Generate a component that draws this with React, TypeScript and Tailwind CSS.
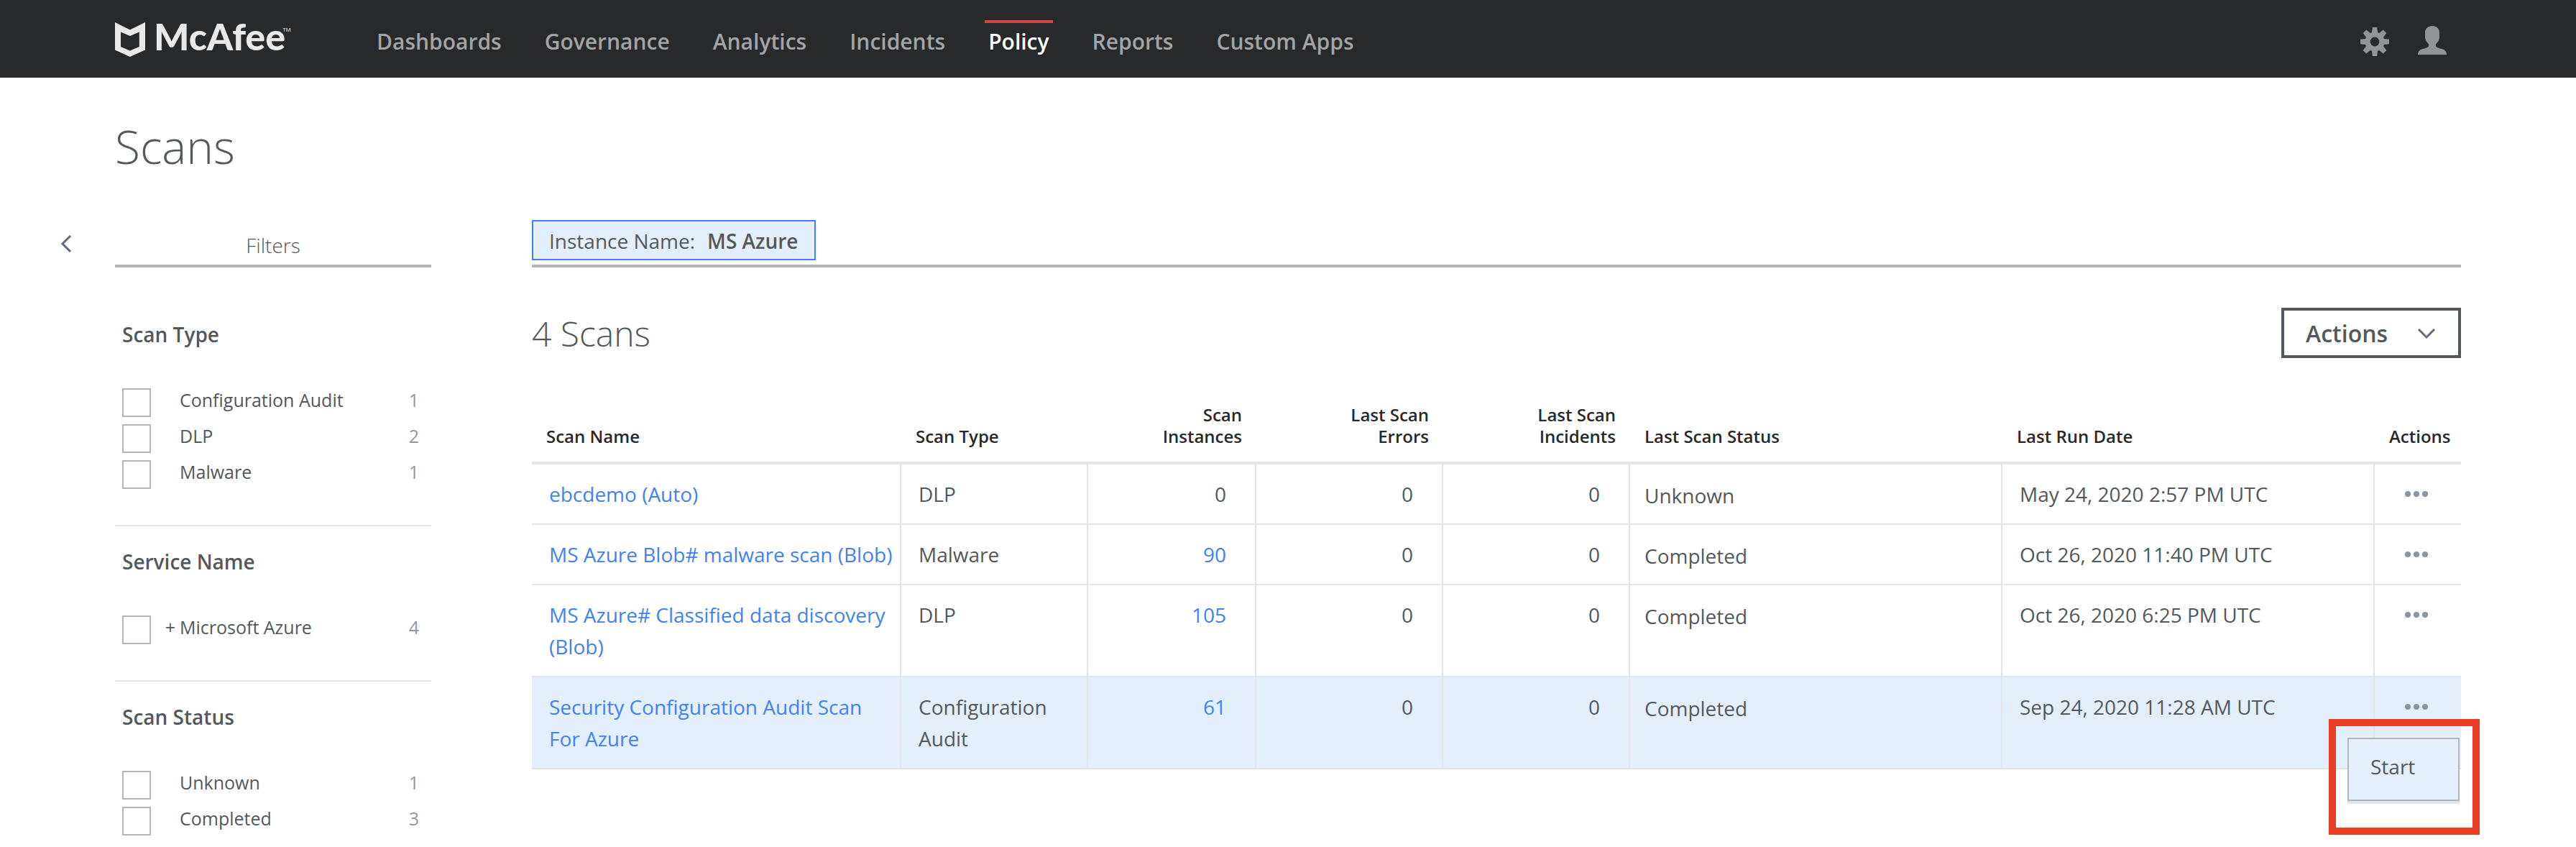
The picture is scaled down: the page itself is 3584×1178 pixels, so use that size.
import React from "react";

const navItems = ["Dashboards", "Governance", "Analytics", "Incidents", "Policy", "Reports", "Custom Apps"];

type FilterOption = { label: string; count: number; expandable?: boolean };

const filterGroups: { title: string; options: FilterOption[] }[] = [
  {
    title: "Scan Type",
    options: [
      { label: "Configuration Audit", count: 1 },
      { label: "DLP", count: 2 },
      { label: "Malware", count: 1 },
    ],
  },
  { title: "Service Name", options: [{ label: "Microsoft Azure", count: 4, expandable: true }] },
  {
    title: "Scan Status",
    options: [
      { label: "Unknown", count: 1 },
      { label: "Completed", count: 3 },
    ],
  },
];

const scans = [
  { name: "ebcdemo (Auto)", type: "DLP", instances: 0, errors: 0, incidents: 0, status: "Unknown", date: "May 24, 2020 2:57 PM UTC" },
  { name: "MS Azure Blob# malware scan (Blob)", type: "Malware", instances: 90, errors: 0, incidents: 0, status: "Completed", date: "Oct 26, 2020 11:40 PM UTC" },
  { name: "MS Azure# Classified data discovery (Blob)", type: "DLP", instances: 105, errors: 0, incidents: 0, status: "Completed", date: "Oct 26, 2020 6:25 PM UTC" },
  { name: "Security Configuration Audit Scan For Azure", type: "Configuration Audit", instances: 61, errors: 0, incidents: 0, status: "Completed", date: "Sep 24, 2020 11:28 AM UTC", menuOpen: true },
];

function Logo() {
  return (
    <a href="#home" className="mt-0.5 flex h-12 w-[246px] items-start text-[#e9e9e9]" aria-label="McAfee home">
      <svg viewBox="0 0 42 48" className="h-12 w-[42px] shrink-0" fill="currentColor" aria-hidden="true">
        <path fillRule="evenodd" d="M0 0 20.8 10.6 42 0V38.4L20.8 48 0 38.4ZM8 13.4V34L20.8 39.4 33.8 34V13.4L20.8 19Z" />
      </svg>
      <span className="ml-3 font-['Lato'] text-[52px] leading-[38px] font-black">McAfee</span>
      <span className="mt-1 -ml-1 text-[8px] leading-[12px]">TM</span>
    </a>
  );
}

function GearIcon() {
  return (
    <svg viewBox="0 0 40 40" className="size-10" fill="currentColor" aria-hidden="true">
      <g>
        {[0, 45, 90, 135, 180, 225, 270, 315].map((a) => (
          <path key={a} d="M16.8 0H23.2L24.2 8H15.8Z" transform={`rotate(${a} 20 20)`} />
        ))}
      </g>
      <path fillRule="evenodd" d="M20 6.500a13.500 13.500 0 1 0 0 27a13.500 13.500 0 1 0 0-27ZM20 13.600a6.400 6.400 0 1 1 0 12.800a6.400 6.400 0 1 1 0-12.800Z" />
    </svg>
  );
}

function PersonIcon() {
  return (
    <svg viewBox="0 0 40 40" className="size-10" fill="currentColor" aria-hidden="true">
      <path d="M20 0C14 0 10 4 10 9.500V15.500C10 19.500 12 22 14 24.300C15.400 26 15.400 28 14.200 29.300C12.500 30.700 10 31.200 7 32C2.500 33.200 0 35.500 0 40H40C40 35.500 37.500 33.200 33 32C30 31.200 27.500 30.700 25.800 29.300C24.600 28 24.600 26 26 24.300C28 22 30 19.500 30 15.500V9.500C30 4 26 0 20 0Z" />
    </svg>
  );
}

function Header() {
  return (
    <header className="flex h-[108px] items-center bg-[#28292b] px-40">
      <Logo />
      <nav className="mt-2 ml-[113px] flex gap-[50px]">
        {navItems.map((item) =>
          item === "Policy" ? (
            <a key={item} href="#policy" aria-current="page" className="relative px-[5px] text-[30px] leading-10 font-semibold text-white">
              <span className="absolute inset-x-0 -top-2.5 h-1 bg-[#d64541]" />
              {item}
            </a>
          ) : (
            <a key={item} href={"#" + item.toLowerCase().replace(" ", "-")} className="px-[5px] text-[30px] leading-10 font-semibold text-[#a3a4a5]">
              {item}
            </a>
          ),
        )}
      </nav>
      <div className="mt-1 mr-5 ml-auto flex items-center gap-10 text-[#939497]">
        <button type="button" aria-label="Settings" className="pt-1"><GearIcon /></button>
        <button type="button" aria-label="Account"><PersonIcon /></button>
      </div>
    </header>
  );
}

function Filters() {
  return (
    <aside className="w-[440px] shrink-0">
      <h2 className="h-[68px] border-b-4 border-[#b2b5ba] pt-[17px] text-center text-[28px] leading-10 font-light">Filters</h2>
      <div className="pt-[73px]">
        {filterGroups.map((group, i) => (
          <section key={group.title} className={i < filterGroups.length - 1 ? "mb-[29px] border-b-2 border-[#e4e5e6] pb-[50px]" : ""}>
            <h3 className="px-2.5 text-[28px] leading-10 font-semibold">{group.title}</h3>
            <ul className="mt-[55px] flex flex-col gap-2.5">
              {group.options.map((o) => (
                <li key={o.label}>
                  <label className="flex h-10 items-start pr-[17px] pl-2.5 text-[25px] leading-[33px]">
                    <input type="checkbox" className="size-10 shrink-0 appearance-none border-2 border-[#b2b5ba] bg-white" />
                    <span className="w-10 shrink-0 pr-1.5 text-right">{o.expandable ? "+" : ""}</span>
                    <span>{o.label}</span>
                    <span className="ml-auto text-[#92979b]">{o.count}</span>
                  </label>
                </li>
              ))}
            </ul>
          </section>
        ))}
      </div>
    </aside>
  );
}

function Count({ value }: { value: number }) {
  return value > 0 ? <a href="#instances" className="text-[#4182f2]">{value}</a> : <>{value}</>;
}

const th = "px-5 pb-5 align-bottom text-2xl leading-[30px] font-semibold text-[#28292b]";
const cell = "border-r-2 border-b-2 border-[#e3e4e6] align-top";
const td = cell + " pt-[19px] pb-[19px]";

function ScanTable() {
  return (
    <table className="mt-[62px] w-full table-fixed border-separate border-spacing-0 text-left text-[28px] leading-[44px]">
      <colgroup>
        <col className="w-[514px]" />
        <col className="w-[260px]" />
        <col className="w-[234px]" />
        <col className="w-[260px]" />
        <col className="w-[260px]" />
        <col />
        <col />
        <col className="w-[120px]" />
      </colgroup>
      <thead>
        <tr className="[&>th]:border-b-4 [&>th]:border-[#e3e4e6]">
          <th scope="col" className={th}>Scan Name</th>
          <th scope="col" className={th}>Scan Type</th>
          <th scope="col" className={th + " text-right"}>Scan<br />Instances</th>
          <th scope="col" className={th + " text-right"}>Last Scan<br />Errors</th>
          <th scope="col" className={th + " text-right"}>Last Scan<br />Incidents</th>
          <th scope="col" className={th}>Last Scan Status</th>
          <th scope="col" className={th}>Last Run Date</th>
          <th scope="col" className={th}>Actions</th>
        </tr>
      </thead>
      <tbody>
        {scans.map((s) => (
          <tr key={s.name} className={s.menuOpen ? "bg-[#e3effd]" : ""}>
            <td className={td + " pr-2 pl-6"}><a href="#scan" className="text-[#4182f2]">{s.name}</a></td>
            <td className={td + " pr-2 pl-6"}>{s.type}</td>
            <td className={td + " pr-10 text-right"}><Count value={s.instances} /></td>
            <td className={td + " pr-10 text-right"}>{s.errors}</td>
            <td className={td + " pr-10 text-right"}>{s.incidents}</td>
            <td className={cell + " pt-[21px] pb-[17px] pl-5"}>{s.status}</td>
            <td className={td + " pl-6"}>{s.date}</td>
            <td className="relative border-b-2 border-[#e3e4e6] pt-[19px] pr-1 align-top">
              <button type="button" aria-label={"Actions for " + s.name} className="mx-auto flex h-[44px] items-center gap-1 px-2">
                <span className="size-2 rounded-full bg-[#8a93a2]" />
                <span className="size-2 rounded-full bg-[#8a93a2]" />
                <span className="size-2 rounded-full bg-[#8a93a2]" />
              </button>
              {s.menuOpen && (
                <div className="absolute top-[58px] -right-[26px] w-[210px] border-10 border-[#ec4026] pt-4 pr-[18px] pb-[37px] pl-4">
                  <button type="button" className="block h-[88px] w-full border-2 border-[#b0b4b9] bg-[#e3effd] pb-2 pl-[30px] text-left shadow-[0_4px_0_#e3e4e6]">
                    Start
                  </button>
                </div>
              )}
            </td>
          </tr>
        ))}
      </tbody>
    </table>
  );
}

export default function App() {
  return (
    <div className="min-h-screen bg-white font-['Open_Sans',sans-serif] text-[#53585c]">
      <Header />
      <h1 className="px-40 pt-[54px] text-[64px] leading-[84px] font-light">Scans</h1>
      <div className="mt-[58px] flex pr-40">
        <div className="w-40 shrink-0 pt-[23px] pl-[83px]">
          <button type="button" aria-label="Collapse filters" className="block">
            <svg viewBox="0 0 18 24" className="h-6 w-[18px]" fill="none" stroke="#5f6b80" strokeWidth="3" aria-hidden="true">
              <path d="M15 1 4 12 15 23" />
            </svg>
          </button>
        </div>
        <Filters />
        <main className="ml-[140px] min-w-0 flex-1">
          <div className="flex h-[68px] items-end border-b-4 border-[#b2b5ba] pb-1.5">
            <button type="button" className="flex h-14 items-center gap-[17px] border-2 border-[#3f80f5] bg-[#e3effd] px-[22px] pt-0.5 text-[28px] leading-10">
              <span>Instance Name:</span>
              <span className="font-semibold">MS Azure</span>
            </button>
          </div>
          <div className="mt-14 flex items-start justify-between">
            <h2 className="text-5xl leading-[72px] font-light">4 Scans</h2>
            <button type="button" className="flex h-[70px] w-[250px] items-center justify-between border-4 border-[#53585c] pt-0.5 pr-8 pl-[30px] text-[32px] leading-10 font-semibold">
              Actions
              <svg viewBox="0 0 24 16" className="h-4 w-6" fill="none" stroke="#5f6b80" strokeWidth="3" aria-hidden="true">
                <path d="M1 2 12 13 23 2" />
              </svg>
            </button>
          </div>
          <ScanTable />
        </main>
      </div>
    </div>
  );
}
